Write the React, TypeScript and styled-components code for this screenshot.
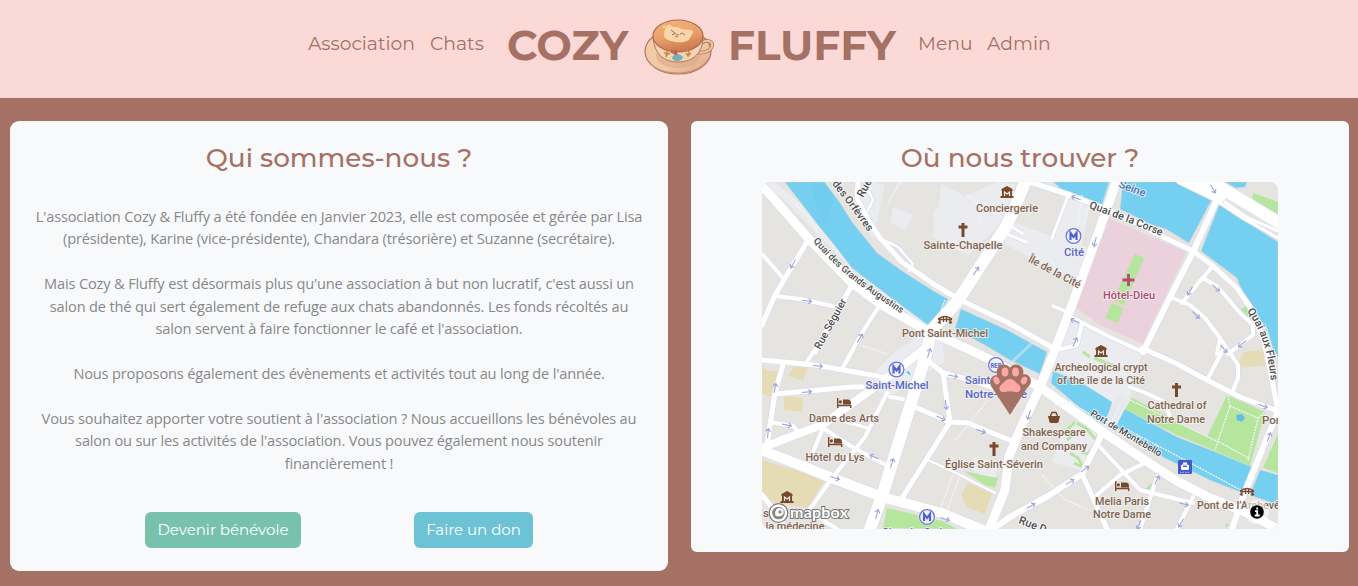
import React from 'react';
import styled, { createGlobalStyle } from 'styled-components';

const brown = '#a57164';

const GlobalStyle = createGlobalStyle`
  * { box-sizing: border-box; }
  body {
    margin: 0;
    background: ${brown};
    font-family: 'Open Sans', 'Noto Sans', sans-serif;
    overflow: hidden;
  }
`;

const Header = styled.header`
  height: 98px;
  padding: 0 0 10px 308px;
  display: flex;
  align-items: center;
  background: #fbd9d7;
  color: ${brown};
  font-family: Montserrat, Inter, sans-serif;
  white-space: nowrap;
`;

const NavLink = styled.a<{ $width: number }>`
  width: ${(p) => p.$width}px;
  font-size: 18.75px;
  font-weight: 400;
  line-height: 24px;
`;

const Brand = styled.div`
  display: flex;
  align-items: center;
  width: 411px;
  padding-top: 3px;
  font-size: 42.2px;
  font-weight: 700;
`;

const BrandWord = styled.span<{ $width: number }>`
  width: ${(p) => p.$width}px;
  margin-top: -1px;
`;

const Cup = styled.svg`
  width: 70px;
  height: 57px;
  flex: none;
  margin-top: 3px;
  margin-right: 14px;
`;

const Main = styled.main`
  display: flex;
  align-items: flex-start;
  gap: 23px;
  padding: 23px 9px 0 10px;
`;

const Card = styled.section<{ $height: number; $radius: number }>`
  width: 658px;
  height: ${(p) => p.$height}px;
  border-radius: ${(p) => p.$radius}px;
  background: #f8f9fb;
  padding-top: 20px;
  display: flex;
  flex-direction: column;
  align-items: center;
`;

const Title = styled.h2`
  margin: 0;
  height: 41px;
  line-height: 34px;
  font-family: Montserrat, Inter, sans-serif;
  font-size: 26.25px;
  font-weight: 500;
  color: ${brown};
`;

const Story = styled.div`
  margin-top: 23px;
  display: flex;
  flex-direction: column;
  gap: 22.5px;
  text-align: center;
  white-space: nowrap;
  font-size: 14.6px;
  letter-spacing: -0.16px;
  line-height: 22.4px;
  color: #888;
`;

const Paragraph = styled.p`
  margin: 0;
`;

const Actions = styled.div`
  display: flex;
  gap: 113px;
  margin-top: 38px;
`;

const Button = styled.button<{ $color: string; $width: number }>`
  width: ${(p) => p.$width}px;
  height: 36px;
  padding: 0 0 2px;
  border: 0;
  border-radius: 6px;
  background: ${(p) => p.$color};
  color: #fff;
  font-family: Montserrat, Inter, sans-serif;
  font-size: 15px;
`;

const MapFrame = styled.svg`
  width: 516px;
  height: 347px;
  border-radius: 8px;
  display: block;
  font-family: Roboto, sans-serif;
`;

const story: string[][] = [
  [
    "L'association Cozy & Fluffy a été fondée en Janvier 2023, elle est composée et gérée par Lisa",
    '(présidente), Karine (vice-présidente), Chandara (trésorière) et Suzanne (secrétaire).',
  ],
  [
    "Mais Cozy & Fluffy est désormais plus qu'une association à but non lucratif, c'est aussi un",
    'salon de thé qui sert également de refuge aux chats abandonnés. Les fonds récoltés au',
    "salon servent à faire fonctionner le café et l'association.",
  ],
  ["Nous proposons également des évènements et activités tout au long de l'année."],
  [
    "Vous souhaitez apporter votre soutient à l'association ? Nous accueillons les bénévoles au",
    "salon ou sur les activités de l'association. Vous pouvez également nous soutenir",
    'financièrement !',
  ],
];

function CupLogo() {
  return (
    <Cup viewBox="0 0 70 57">
      <defs>
        <linearGradient id="coffee" x1="0" y1="0" x2="0.3" y2="1">
          <stop offset="0" stopColor="#f3b27c" />
          <stop offset="0.55" stopColor="#eaa26c" />
          <stop offset="1" stopColor="#cf7d50" />
        </linearGradient>
        <linearGradient id="saucer" x1="0" y1="0" x2="1" y2="1">
          <stop offset="0" stopColor="#f3cda9" />
          <stop offset="0.6" stopColor="#eecaa9" />
          <stop offset="1" stopColor="#dba07f" />
        </linearGradient>
      </defs>
      <ellipse cx="34" cy="32.500" rx="33" ry="22.500" fill="url(#saucer)" stroke="#b27660" strokeWidth="1.2" />
      <path d="M4 41C10 52 25 54 35 54s25-5 29-14" fill="none" stroke="#c98e70" strokeWidth="1" />
      <ellipse cx="34" cy="37" rx="22" ry="12" fill="#d9a27f" opacity=".5" />
      <path d="M57 24c6-4 12-2 11 3s-9 8-16 6" fill="none" stroke="#ad6b55" strokeWidth="3.600" />
      <path d="M57 24c6-4 12-2 11 3s-9 8-16 6" fill="none" stroke="#edc29d" strokeWidth="2.200" />
      <path d="M9 18c1 15 9 25 25 25s25-10 25-25z" fill="#f1d5b5" stroke="#b27660" />
      <ellipse cx="34" cy="17" rx="25" ry="16" fill="url(#coffee)" stroke="#ad6b50" strokeWidth="1.2" />
      <path d="M20 16c0-4 2-10 5-10.500 2 0 3 3 5 2.500 4-.5 6 1 8 2 3 1 9 0 11 2 1 2-2 4-3 7-2 4-8 5-14 4-7-1-12-3-12-7z" fill="#fbd5a9" />
      <path d="M27 11l4 3M28 15.500c2 0 3-.5 3-1.500 1 2 2 2.500 4 1.500M31 17c1 1 2 1 3 0M36 15q3-2 5 1" fill="none" stroke="#9d654b" strokeWidth=".9" />
      <circle cx="20" cy="8" r="1.300" fill="#ffd29d" />
      <path d="M22 38l1-5 2 2M20 33l3 3 3-2M42 34l2 3 3-3M44 37l1-5" fill="none" stroke="#d18a3a" strokeWidth="1.500" />
      <path d="M28 39c2-5 7-5 11-1 0 4-9 6-11 1z" fill="#77aebc" />
      <path d="M27 33l4 2v-4l2 5" fill="none" stroke="#b6534e" strokeWidth="1.200" />
    </Cup>
  );
}

const WATER = [
  'M785 182L824 182 838 200 852 222 865 238 877 253 902 271 935 292 948 299 932 327 928 325 890 297 852 268 836 247 818 225z',
  'M961 309L1007 330 1047 352 1040 374 1010 360 985 345 955 329z',
  'M1053 371L1085 385 1112 402 1105 425 1080 408 1051 383z',
  'M1125 409L1177 437 1213 451 1252 467 1243 493 1210 480 1163 457 1115 426z',
  'M1260 470L1278 475 1278 505 1250 495z',
  'M1053 182L1109 182 1101 208 1070 196z',
  'M1123 182L1177 182 1212 199 1189 243 1166 229 1150 224 1120 209z',
  'M1220 203L1201 251 1217 263 1237 278 1247 305 1267 328 1273 348 1278 357 1278 242 1247 222z',
  'M1225 182L1247 182 1245 187 1236 188z',
];

const PLAZA = [
  'M762 182L774 182 940 315 928 328 850 268 790 205z',
  'M868 182L885 185 873 240 857 210z',
  'M893 207L913 215 905 230 890 222z',
  'M941 184L963 195 950 212 939 207z',
  'M934 210L997 182 1015 185 1001 224 968 255 933 237z',
  'M1010 221L1062 240 1095 250 1080 282 1052 270 1005 244z',
  'M895 352L920 335 942 340 945 362 928 372 892 395 858 388z',
  'M1072 322L1142 354 1126 412 1095 392 1050 365z',
  'M1067 182L1093 190 1082 245 1055 238z',
  'M974 457L1000 462 995 480 972 470z',
  'M1064 430L1085 415 1103 437 1080 470 1052 462z',
];

const PARKS = [
  'M1135 254L1144 258 1124 305 1113 300z',
  'M1112 303L1123 308 1118 323 1105 318z',
  'M1253 193L1278 202 1278 214 1252 203z',
  'M1132 398L1164 414 1207 437 1227 395 1265 412 1250 466 1213 450 1177 435 1125 409z',
  'M1278 434L1278 473 1263 468z',
  'M887 508L942 521 957 529 883 528z',
  'M964 471L981 475 998 478 995 488 985 485z',
  'M1241 309L1248 305 1251 323 1243 317z',
  'M1144 490L1153 482 1150 491z',
  'M1226 523L1229 525 1225 528z',
];

const SAND = [
  'M762 367L770 371 779 371 775 393 768 397 762 393z',
  'M794 367L808 367 803 381 788 376z',
  'M784 396L803 398 802 412 784 410z',
  'M762 460L825 479 808 508 762 500z',
  'M968 483L992 493 985 514 967 507 961 495z',
  'M1244 352L1265 349 1267 365 1240 368 1238 363z',
];

type Road = [string, number];
const ROADS: Road[] = [
  ['M763 255L783 278', 4],
  ['M808 240L775 295 762 325', 5],
  ['M775 296L800 299 837 307', 4],
  ['M852 285L835 316 815 352', 5],
  ['M880 305L865 328 848 358', 4],
  ['M853 350L843 367', 4],
  ['M816 348L805 365', 4],
  ['M762 360L815 365 883 377', 5],
  ['M783 365L775 393 767 445', 5],
  ['M775 394L852 387 862 387', 5],
  ['M770 422L793 426 798 431', 4],
  ['M823 428L852 447 888 466', 4],
  ['M887 393L865 437 832 478 808 512', 4],
  ['M823 428L813 452', 4],
  ['M842 421L868 428', 3],
  ['M762 495L778 515 786 529', 5],
  ['M818 517L837 529', 4],
  ['M927 360L943 373 950 422 902 498', 5],
  ['M943 373L967 379 1000 390', 5],
  ['M915 407L950 422 968 423 1017 443', 5],
  ['M928 460L960 475 995 493', 2],
  ['M890 397L903 399', 4],
  ['M1100 447L1140 490 1193 503', 4],
  ['M1145 463L1120 475 1097 495', 4],
  ['M1157 477L1140 529', 4],
  ['M1193 497L1177 529', 4],
  ['M1082 474L1107 529', 5],
  ['M1103 432L1082 474 1048 496 1010 517 993 529', 6],
  ['M1213 266L1200 281 1182 303', 4],
  ['M1170 297L1190 305 1205 318 1220 338 1230 353', 4],
  ['M1220 338L1217 354', 4],
  ['M1203 278L1218 287 1240 313 1253 325 1253 335 1228 354', 4],
  ['M1228 350L1238 365 1238 378 1232 393', 4],
  ['M1223 350L1207 380', 4],
  ['M1130 387L1148 394 1165 402 1170 417', 4],
  ['M1142 348L1177 364 1207 380 1240 397 1278 411', 5],
  ['M1073 318L1110 337 1143 352', 4],
  ['M1070 317L1082 323 1077 345 1053 351', 4],
  ['M1068 196L1052 238', 3],
  ['M1007 224L1022 233M1009 235L1026 242', 3],
  ['M1053 306L1070 313', 3],
  ['M858 182L857 198 870 223 880 238 902 262 935 285 960 300 1007 322 1053 348', 5],
  ['M882 239L898 247 913 264 909 271', 2.5],
  ['M869 192L873 200 868 210', 2.5],
  ['M1030 182L1070 195 1103 208 1135 222 1163 237 1193 251 1213 266 1237 288 1252 310 1264 341 1270 370 1278 411', 5],
  ['M1217 200L1193 252 1170 297 1143 352', 6],
  ['M1178 182L1219 202 1243 218 1278 238', 3],
  ['M1225 202L1248 218 1278 231', 3],
  ['M1185 179L1220 196M1208 180L1233 195 1278 222', 12],
  ['M1278 411L1243 497 1231 532', 6],
  ['M762 448L787 438 822 425 854 402 885 380 928 346', 8],
  ['M758 449L787 460 832 478 882 497 942 513 988 532', 10],
  ['M1117 180L1100 228 1073 302 1053 355 1040 387 1023 423 1009 456 1005 490 988 532', 9],
  ['M759 184L768 192 808 238 852 283 880 304 928 331 970 350 995 362 1040 387 1103 432 1140 457 1177 481 1210 498 1243 511 1280 530', 9],
  ['M1026 180L1007 225 957 302 931 331 927 351 912 400 883 493 869 532', 12],
];

const PATHS = [
  'M794 203L810 218 818 232',
  'M945 300L935 325M965 292L958 310',
  'M987 401L955 441',
  'M953 475L940 510M960 475L947 511',
  'M1130 400L1225 445 1250 459',
  'M1228 395L1230 406 1215 450M1230 406L1258 418 1248 460M1258 418L1265 412',
  'M1055 405L1070 402 1090 414M1042 475L1064 499 1090 511',
  'M1128 430L1170 452 1250 495',
  'M860 345L887 354',
  'M967 195L982 207 978 228M900 182L888 204M1082 195L1078 225M1090 200L1084 224',
  'M1120 405L1109 428M1124 408L1113 432',
];

const ARROWS: [number, number, number][] = [
  [793, 264, 120], [807, 301, 8], [860, 338, -57], [976, 271, -55], [1076, 198, 200], [1095, 242, 105],
  [1075, 321, 205], [1075, 342, -65], [1190, 291, 120], [1216, 288, 42], [1196, 315, 45], [1224, 349, 45],
  [1242, 344, 140], [818, 366, 5], [807, 392, -5], [775, 388, -78], [768, 433, -84], [787, 425, 10],
  [835, 478, 18], [874, 457, 205], [892, 463, -73], [877, 514, -75], [945, 519, 18], [953, 376, 12],
  [946, 405, 80], [941, 418, 25], [981, 431, 20], [1029, 415, 108], [1070, 482, -32], [1085, 469, -35],
  [1031, 506, -30], [1157, 480, -65], [1184, 504, 15], [1181, 523, 120], [1139, 525, 110], [1263, 406, 20],
  [1269, 437, -68], [929, 353, -72], [1213, 189, 60],
];

interface LabelProps {
  x: number;
  y: number;
  w: number;
  c?: string;
  r?: number;
  children: string;
}

function Label({ x, y, w, c = '#806552', r = 0, children }: LabelProps) {
  return (
    <text
      x={x}
      y={y}
      transform={r ? `rotate(${r} ${x} ${y})` : undefined}
      textAnchor="middle"
      textLength={w}
      lengthAdjust="spacingAndGlyphs"
      fontSize={11}
      fontWeight={500}
      fill={c}
      stroke="#f4f2ef"
      strokeWidth={2}
      strokeOpacity={0.8}
      paintOrder="stroke"
    >
      {children}
    </text>
  );
}

function PathLabel({ id, d, size = 11, children }: { id: string; d: string; size?: number; children: string }) {
  return (
    <>
      <path id={id} d={d} fill="none" />
      <text fontSize={size} fontWeight={500} fill="#4c4c50" stroke="#fff" strokeWidth={1.8} strokeOpacity={0.8} paintOrder="stroke">
        <textPath href={`#${id}`}>{children}</textPath>
      </text>
    </>
  );
}

const Cross = ({ x, y }: { x: number; y: number }) => (
  <path d={`M${x} ${y - 7}v14M${x - 4.5} ${y - 3}h9`} stroke="#77492f" strokeWidth={3} fill="none" />
);

const Museum = ({ x, y }: { x: number; y: number }) => (
  <g transform={`translate(${x - 6.5} ${y - 6})`}>
    <path d="M6.5 0L12 3v2H1V3zM1.500 5h10v5h1.500v2H0v-2h1.500z" fill="#77492f" />
    <path d="M4 10V6l2.500 2L9 6v4" fill="none" stroke="#f3e9df" strokeWidth={1.2} />
  </g>
);

const Bed = ({ x, y }: { x: number; y: number }) => (
  <g transform={`translate(${x - 7} ${y - 5})`}>
    <path d="M.7 0v10M.7 7.500h13V10" fill="none" stroke="#77492f" strokeWidth={1.4} />
    <circle cx="3.400" cy="3.800" r="1.600" fill="#77492f" />
    <path d="M6 1.500h5.500q2.500.5 2.500 3V6.500H6z" fill="#77492f" />
  </g>
);

const Bridge = ({ x, y }: { x: number; y: number }) => (
  <path
    transform={`translate(${x - 7} ${y - 4})`}
    d="M0 3Q7-2 14 3M0 3.500h14M2 2v6M5.500 1v5M8.500 1v5M12 2v6M2 5l-2 2M12 5l2 2"
    stroke="#77492f"
    strokeWidth={1.3}
    fill="none"
  />
);

const Metro = ({ x, y }: { x: number; y: number }) => (
  <g>
    <circle cx={x} cy={y} r={8.5} fill="#f1f3ff" />
    <circle cx={x} cy={y} r={7.4} fill="none" stroke="#6a78d6" strokeWidth={1.3} />
    <path d={`M${x - 3} ${y + 4}v-7l3 4 3-4v7`} fill="none" stroke="#5263d0" strokeWidth={2.2} />
  </g>
);

function ParisMap() {
  return (
    <MapFrame viewBox="762 182 516 347">
      <rect x="762" y="182" width="516" height="347" fill="#e5e4e0" />
      {PLAZA.map((d) => <path key={d} d={d} fill="#ebecf0" />)}
      {SAND.map((d) => <path key={d} d={d} fill="#e5dcb6" />)}
      <path d="M1108 218L1186 252 1143 344 1100 325 1076 307z" fill="#ead1db" />
      {WATER.map((d) => <path key={d} d={d} fill="#75cff0" stroke="#c5d5dd" strokeWidth={0.6} />)}
      <path d="M812 182h14l8 18-9 27-8-15z" fill="#64c3e7" opacity={0.2} />
      {PARKS.map((d) => <path key={d} d={d} fill="#b6e59e" />)}
      <path d="M1075 422l-8 8 8 3-8 7M1077 423l10 6 10 12-9 13-7-2M1070 453l8 5 5 9-9-4M1083 352l7 5M1094 358l25 10" fill="none" stroke="#b6e59e" strokeWidth={3} />
      <path d="M1236 415l6-1 3 4-3 4-5-2zM906 372l5 4-2-5z" fill="#61bfe7" />
      <path d="M1123 397L1107 430" stroke="#e7e8ee" strokeWidth={12} />
      <path d="M1051 325L1010 364" stroke="#dfe7ee" strokeWidth={3} opacity={0.55} />
      {ROADS.map(([d, w]) => <path key={d} d={d} fill="none" stroke="#dddeeb" strokeWidth={w + 1.6} strokeLinejoin="round" />)}
      {ROADS.map(([d, w]) => <path key={d} d={d} fill="none" stroke="#fff" strokeWidth={w} strokeLinejoin="round" strokeLinecap="round" />)}
      {PATHS.map((d) => <path key={d} d={d} fill="none" stroke="#f5f5f9" strokeWidth={1.3} strokeDasharray="2 1" />)}
      {ARROWS.map(([x, y, r]) => (
        <path key={`${x}-${y}`} transform={`translate(${x} ${y}) rotate(${r})`} d="M-5 0H4M1.500-2.500L4.500 0 1.500 2.500" fill="none" stroke="#9ba5d8" strokeWidth={1.1} />
      ))}

      <PathLabel id="orfevres" d="M832 184Q848 204 874 240" size={10.6}>des Orfèvres</PathLabel>
      <PathLabel id="rue" d="M863 198L883 162">Rue</PathLabel>
      <PathLabel id="augustins" d="M813 241Q834 266 857 283T911 320" size={9.5}>Quai des Grands Augustins</PathLabel>
      <PathLabel id="seguier" d="M820 350L855 286" size={10.4}>Rue Séguier</PathLabel>
      <PathLabel id="corse" d="M1089 208Q1126 221 1176 242" size={10.6}>Quai de la Corse</PathLabel>
      <PathLabel id="fleurs" d="M1247 311Q1270 342 1272 396" size={10.8}>Quai aux Fleurs</PathLabel>
      <PathLabel id="montebello" d="M1090 415Q1122 435 1172 464" size={9.5}>Port de Montebello</PathLabel>
      <PathLabel id="rued" d="M1018 523L1062 540">Rue D</PathLabel>
      <Label x={1131} y={192} w={28} r={21} c="#4777bd">Seine</Label>
      <Label x={1053} y={275} w={58} r={28}>Île de la Cité</Label>
      <Label x={1007} y={212} w={62}>Conciergerie</Label>
      <Label x={963} y={249} w={79}>Sainte-Chapelle</Label>
      <Label x={945} y={337} w={86}>Pont Saint-Michel</Label>
      <Label x={1129} y={299} w={52} c="#b24b78">Hôtel-Dieu</Label>
      <Label x={1074} y={256} w={20} c="#5568cc">Cité</Label>
      <Label x={897} y={389} w={63} c="#5568cc">Saint-Michel</Label>
      <Label x={996} y={384} w={62} c="#5568cc">Saint-Michel</Label>
      <Label x={996} y={398} w={62} c="#5568cc">Notre-Dame</Label>
      <Label x={844} y={422} w={70}>Dame des Arts</Label>
      <Label x={835} y={461} w={59}>Hôtel du Lys</Label>
      <Label x={994} y={468} w={98}>Église Saint-Séverin</Label>
      <Label x={1101} y={371} w={93}>Archeological crypt</Label>
      <Label x={1101} y={384} w={88}>of the île de la Cité</Label>
      <Label x={1177} y={409} w={59}>Cathedral of</Label>
      <Label x={1176} y={423} w={58}>Notre Dame</Label>
      <Label x={1054} y={436} w={63}>Shakespeare</Label>
      <Label x={1054} y={450} w={66}>and Company</Label>
      <Label x={1122} y={505} w={54}>Melia Paris</Label>
      <Label x={1122} y={518} w={58}>Notre Dame</Label>
      <Label x={1247} y={509} w={100}>Pont de l’Archevêché</Label>
      <Label x={1274} y={424} w={24}>Pont</Label>
      <Label x={769} y={517} w={12}>se</Label>
      <Label x={795} y={530} w={59}>la médecine</Label>
      <Label x={925} y={536} w={86} c="#5263d0">Cluny La Sorbonne</Label>

      <Museum x={1007} y={192} />
      <Museum x={1101} y={351} />
      <Museum x={787} y={497} />
      <Cross x={963} y={230} />
      <Cross x={994} y={449} />
      <Cross x={1176.5} y={390} />
      <Bed x={844} y={403} />
      <Bed x={835} y={442} />
      <Bed x={1122} y={486} />
      <Bridge x={945} y={320} />
      <Bridge x={1247} y={492} />
      <Metro x={1073.5} y={236} />
      <Metro x={896.5} y={369.5} />
      <Metro x={927} y={517} />
      <path d="M1128.500 274v12M1122.500 280h12" stroke="#b64b77" strokeWidth={2.8} />
      <circle cx="996" cy="365" r="8.500" fill="#f1f3ff" />
      <circle cx="996" cy="365" r="7.400" fill="none" stroke="#6a78d6" strokeWidth={1.2} />
      <text x="996" y="368" textAnchor="middle" fontSize="8" fontWeight="700" fill="#5263d0" textLength="11" lengthAdjust="spacingAndGlyphs">RER</text>
      <path d="M1048 416h12l-1.500 6q-.5 1-1.500 1h-6q-1 0-1.500-1z" fill="#77492f" />
      <path d="M1050.500 416l1.500-3.500h4l1.500 3.500" fill="none" stroke="#77492f" strokeWidth={1.4} />
      <rect x="1178" y="460" width="14" height="14" rx="1" fill="#4659cc" />
      <rect x="1183" y="462.500" width="4" height="2" fill="#fff" />
      <rect x="1181" y="464.500" width="8" height="5.500" rx="1.500" fill="#fff" />
      <rect x="1183" y="465.700" width="4" height="1.300" fill="#4659cc" />
      <path d="M1180 472.300h10" stroke="#b7bff3" strokeWidth={1} strokeDasharray="1.500 1" />

      <path d="M991 386L1029 385 1010 415z" fill={brown} />
      <g fill={brown}>
        <circle cx="997" cy="382" r="7" />
        <circle cx="1004" cy="372" r="7.500" />
        <circle cx="1016" cy="372" r="7.500" />
        <circle cx="1024" cy="381" r="7" />
        <circle cx="1010" cy="387" r="13" />
      </g>
      <g fill="#fda7a7">
        <ellipse cx="996.500" cy="380.500" rx="3" ry="4" transform="rotate(-25 996.500 380.500)" />
        <ellipse cx="1005" cy="372" rx="3.400" ry="4.600" />
        <ellipse cx="1015.500" cy="372" rx="3.400" ry="4.600" />
        <ellipse cx="1024" cy="380.500" rx="3" ry="4" transform="rotate(25 1024 380.500)" />
        <path d="M1010 379c4 0 5 3 8 5 5 4 2 9-3 8-3-1-7-1-10 0-5 1-8-4-3-8 3-2 4-5 8-5z" />
      </g>

      <circle cx="778.500" cy="513" r="9.300" fill="#fff" stroke="#777" strokeWidth={1.2} />
      <circle cx="778.500" cy="513" r="6.300" fill="#898480" />
      <circle cx="779.700" cy="512" r="4" fill="#fff" />
      <path d="M775.500 511q-1 4 .5 5 3 1 5.500-.5z" fill="#fff" />
      <path d="M780 509.200l.8 2 2 .8-2 .8-.8 2-.8-2-2-.8 2-.8z" fill="#898480" />
      <text x="790" y="518" fontFamily="Lato, sans-serif" fontWeight="700" fontSize="16" fill="#fff" stroke="#777" strokeWidth={2} paintOrder="stroke" textLength="58">mapbox</text>
      <circle cx="1257" cy="512" r="12" fill="#fff" opacity=".55" />
      <circle cx="1257" cy="512" r="6.800" fill="#000" />
      <path d="M1257.200 507.500v2M1255 511.200h2.200v4.200M1254.700 515.500h5" stroke="#fff" strokeWidth={1.8} fill="none" />
    </MapFrame>
  );
}

export default function App() {
  return (
    <>
      <GlobalStyle />
      <Header>
        <NavLink $width={122}>Association</NavLink>
        <NavLink $width={77}>Chats</NavLink>
        <Brand>
          <BrandWord $width={137}>COZY</BrandWord>
          <CupLogo />
          <BrandWord $width={170}>FLUFFY</BrandWord>
        </Brand>
        <NavLink $width={69}>Menu</NavLink>
        <NavLink $width={66}>Admin</NavLink>
      </Header>
      <Main>
        <Card $height={450} $radius={9}>
          <Title>Qui sommes-nous ?</Title>
          <Story>
            {story.map((lines) => (
              <Paragraph key={lines[0]}>
                {lines.map((line, i) => (
                  <React.Fragment key={line}>
                    {i > 0 && <br />}
                    {line}
                  </React.Fragment>
                ))}
              </Paragraph>
            ))}
          </Story>
          <Actions>
            <Button $color="#78c2ad" $width={156}>Devenir bénévole</Button>
            <Button $color="#6cc3d5" $width={119}>Faire un don</Button>
          </Actions>
        </Card>
        <Card $height={431} $radius={6}>
          <Title>Où nous trouver ?</Title>
          <ParisMap />
        </Card>
      </Main>
    </>
  );
}
